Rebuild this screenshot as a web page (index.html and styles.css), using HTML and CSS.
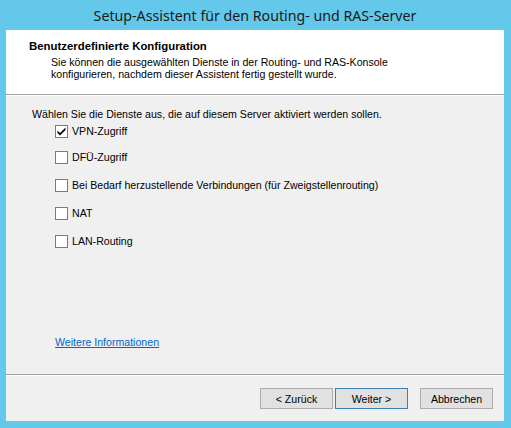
FILE: index.html
```html
<!DOCTYPE html>
<html lang="de">
<head>
<meta charset="utf-8">
<title>Setup-Assistent</title>
<link rel="stylesheet" href="styles.css">
</head>
<body>
<div class="window">
  <div class="titlebar">Setup-Assistent für den Routing- und RAS-Server</div>
  <div class="client">
    <div class="header">
      <div class="heading">Benutzerdefinierte Konfiguration</div>
      <div class="subtitle">Sie können die ausgewählten Dienste in der Routing- und RAS-Konsole<br>konfigurieren, nachdem dieser Assistent fertig gestellt wurde.</div>
    </div>
    <div class="sep"></div>
    <div class="body">
      <div class="intro">Wählen Sie die Dienste aus, die auf diesem Server aktiviert werden sollen.</div>
      <div class="options">
        <label class="opt first"><span class="box checked"><svg viewBox="0 0 11 11" width="11" height="11"><path d="M1.5 4.5 L4 7 L9.5 1.5 L9.5 4 L4 9.5 L1.5 7 Z" fill="#000"/></svg></span><span>VPN-Zugriff</span></label>
        <label class="opt second"><span class="box"></span><span>DFÜ-Zugriff</span></label>
        <label class="opt"><span class="box"></span><span>Bei Bedarf herzustellende Verbindungen (für Zweigstellenrouting)</span></label>
        <label class="opt"><span class="box"></span><span>NAT</span></label>
        <label class="opt"><span class="box"></span><span>LAN-Routing</span></label>
      </div>
      <a class="link" href="#">Weitere Informationen</a>
    </div>
    <div class="sep"></div>
    <div class="footer">
      <button class="btn">&lt; Zurück</button>
      <button class="btn default">Weiter &gt;</button>
      <button class="btn cancel">Abbrechen</button>
    </div>
  </div>
</div>
</body>
</html>
```

FILE: styles.css
```css
html, body {
  margin: 0;
  padding: 0;
  background: #63c8ea;
}
.window {
  width: 511px;
  height: 428px;
  box-sizing: border-box;
  padding: 0 7px 7px 6px;
  display: flex;
  flex-direction: column;
  font-family: "Liberation Sans", Arial, sans-serif;
  font-size: 10.6px;
  color: #000;
}
.titlebar {
  height: 30px;
  line-height: 31px;
  text-align: center;
  font-family: "Noto Sans", "Open Sans", sans-serif;
  font-size: 14.2px;
  color: #1a1a1a;
  flex: none;
}
.client {
  flex: 1;
  display: flex;
  flex-direction: column;
  background: #f0f0f0;
}
.header {
  height: 64px;
  flex: none;
  box-sizing: border-box;
  background: #fff;
  padding: 10px 0 0 23px;
}
.heading {
  font-weight: bold;
  font-size: 11.4px;
  line-height: 13px;
}
.subtitle {
  margin: 3px 0 0 22px;
  line-height: 12px;
}
.sep {
  flex: none;
  height: 1px;
  background: #a0a0a0;
  border-bottom: 1px solid #fff;
}
.body {
  flex: 1;
  display: flex;
  flex-direction: column;
  padding: 12px 0 25px 26px;
}
.intro {
  line-height: 13px;
}
.options {
  display: flex;
  flex-direction: column;
  padding-left: 23px;
}
.opt {
  display: flex;
  align-items: center;
  height: 13px;
  line-height: 13px;
  margin-top: 15px;
}
.opt.first { margin-top: 4px; }
.opt.second { margin-top: 13px; }
.box {
  width: 13px;
  height: 13px;
  box-sizing: border-box;
  border: 1px solid #7a7a7a;
  background: #fff;
  margin-right: 4px;
  display: flex;
  align-items: center;
  justify-content: center;
  flex: none;
}
.link {
  margin-top: auto;
  margin-left: 23px;
  align-self: flex-start;
  color: #0066cc;
  text-decoration: underline;
  line-height: 13px;
}
.footer {
  flex: none;
  height: 45px;
  box-sizing: border-box;
  display: flex;
  justify-content: flex-end;
  align-items: flex-start;
  padding: 12px 11px 0 0;
}
.btn {
  width: 73px;
  height: 21px;
  box-sizing: border-box;
  border: 1px solid #adadad;
  background: #e1e1e1;
  font-family: "Liberation Sans", Arial, sans-serif;
  font-size: 10.6px;
  color: #000;
  padding: 0;
  margin-left: 2px;
}
.btn.default {
  border-color: #3c7fb1;
}
.btn.cancel {
  margin-left: 12px;
}
```
